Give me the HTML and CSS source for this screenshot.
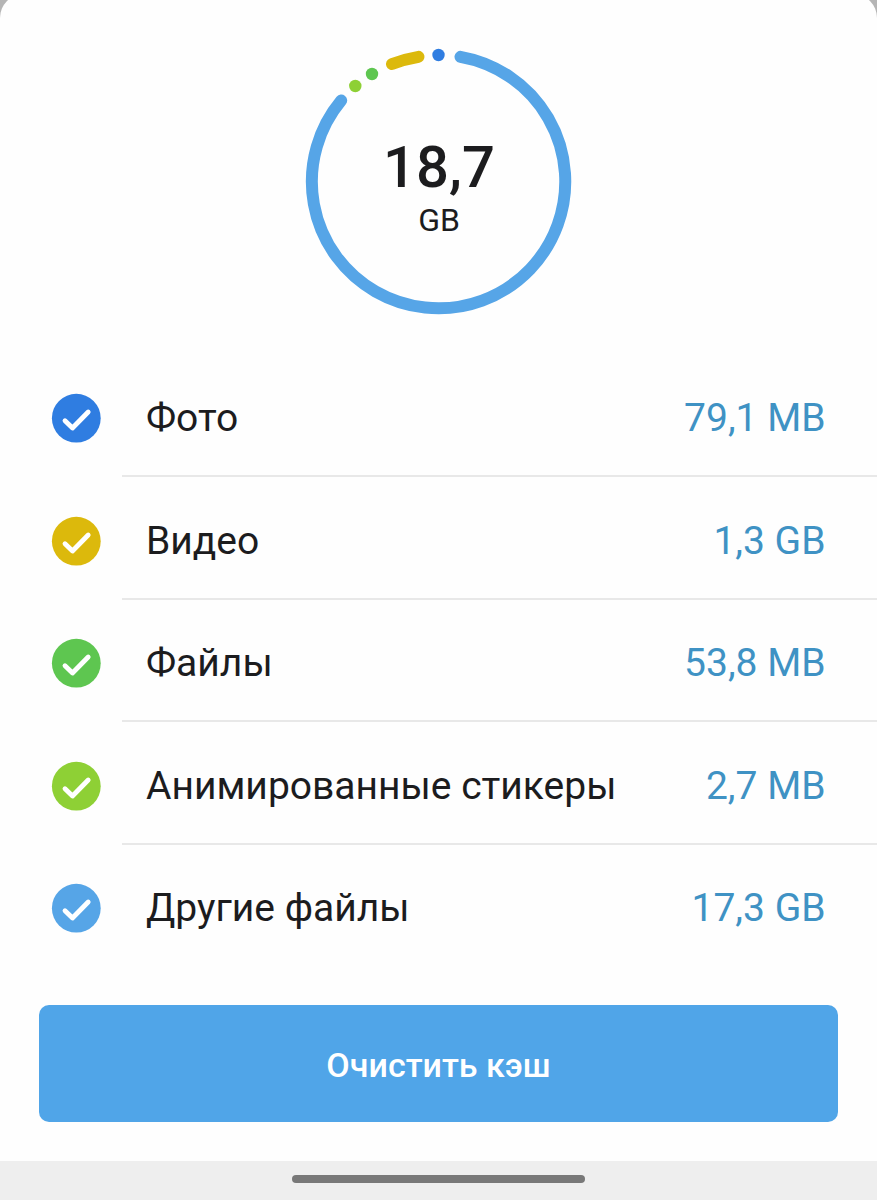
FILE: index.html
```html
<!DOCTYPE html>
<html lang="ru"><head><meta charset="utf-8"><title>Кэш</title>
<link rel="stylesheet" href="styles.css"></head>
<body>
<main class="sheet">
<section class="summary">
<svg class="ring" viewBox="0 0 268 268">
<g fill="none" stroke-linecap="round" stroke-width="12">
<path stroke="#56a5e7" d="M155.500 8.800A126.700 126.700 0 1 1 36.200 52.500"/>
<path stroke="#dcb90c" d="M87 16Q100 11 113.500 8.800"/></g>
<circle cx="133.500" cy="7" r="6.200" fill="#2f7de1"/>
<circle cx="67" cy="26" r="6.200" fill="#5ec650"/>
<circle cx="50.300" cy="38" r="6.200" fill="#8ed035"/>
</svg>
<div class="total"><strong>18,7</strong><span>GB</span></div>
</section>
<ul class="list">
<li class="row"><svg class="check photo" viewBox="0 0 50 50"><circle cx="25.3" cy="25.2" r="24.400"/><path d="M14 27.700L21.500 35L37.200 19"/></svg><div class="line"><span>Фото</span><b>79,1 MB</b></div></li>
<li class="row"><svg class="check video" viewBox="0 0 50 50"><circle cx="25.3" cy="25.2" r="24.400"/><path d="M14 27.700L21.500 35L37.200 19"/></svg><div class="line"><span>Видео</span><b>1,3 GB</b></div></li>
<li class="row"><svg class="check files" viewBox="0 0 50 50"><circle cx="25.3" cy="25.2" r="24.400"/><path d="M14 27.700L21.500 35L37.200 19"/></svg><div class="line"><span>Файлы</span><b>53,8 MB</b></div></li>
<li class="row"><svg class="check stickers" viewBox="0 0 50 50"><circle cx="25.3" cy="25.2" r="24.400"/><path d="M14 27.700L21.500 35L37.200 19"/></svg><div class="line"><span>Анимированные стикеры</span><b>2,7 MB</b></div></li>
<li class="row"><svg class="check other" viewBox="0 0 50 50"><circle cx="25.3" cy="25.2" r="24.400"/><path d="M14 27.700L21.500 35L37.200 19"/></svg><div class="line"><span>Другие файлы</span><b>17,3 GB</b></div></li>
</ul>
<button class="clear">Очистить кэш</button>
</main>
<footer class="nav"><div class="handle"></div></footer>
</body></html>
```
FILE: styles.css
```css
*{box-sizing:border-box}
body{margin:0;height:1200px;background:#b5b5b5;font-family:Roboto,sans-serif;color:#1c1c1e;display:flex;flex-direction:column;overflow:hidden}
.sheet{height:1167px;flex:none;margin-top:-6px;padding-top:6px;background:#fefefe;border-radius:24px 24px 0 0;display:flex;flex-direction:column}
.summary{height:354.5px;padding-top:48px;display:grid;justify-items:center;align-items:start}
.ring,.total{grid-area:1/1}
.ring{width:268px;height:268px}
.total{display:flex;flex-direction:column;align-items:center;padding:84px 0 0 1px}
.total strong{font-size:58px;line-height:70px;font-weight:500}
.total span{font-size:32px;line-height:36px}
.list{list-style:none;margin:0;padding:0}
.row{height:122.5px;display:flex;padding-left:51px}
.check{width:50px;height:50px;margin-top:38.7px;margin-right:21px;flex:none}
.check path{fill:none;stroke:#fff;stroke-width:4.8;stroke-linecap:round;stroke-linejoin:round}
.photo{fill:#2f7de1}.video{fill:#dcb90c}.files{fill:#5ec650}.stickers{fill:#8ed035}.other{fill:#56a5e7}
.line{flex:1;display:flex;justify-content:space-between;padding:40.5px 51.5px 0 24px;border-bottom:2px solid #e8e8e8;font-size:39px;line-height:46px}
.row:last-child .line{border-bottom:0}
.line b{font-weight:400;color:#3f92c4}
.clear{margin:38px 39px 0;height:117px;padding:3px 0 0;border:0;border-radius:10px;background:#50a5e8;color:#fff;font:500 34px/40px Roboto,sans-serif}
.nav{height:39px;flex:none;background:#eee;display:flex;justify-content:center;padding-top:14px}
.handle{width:293px;height:8px;border-radius:4px;background:#787878}
```
